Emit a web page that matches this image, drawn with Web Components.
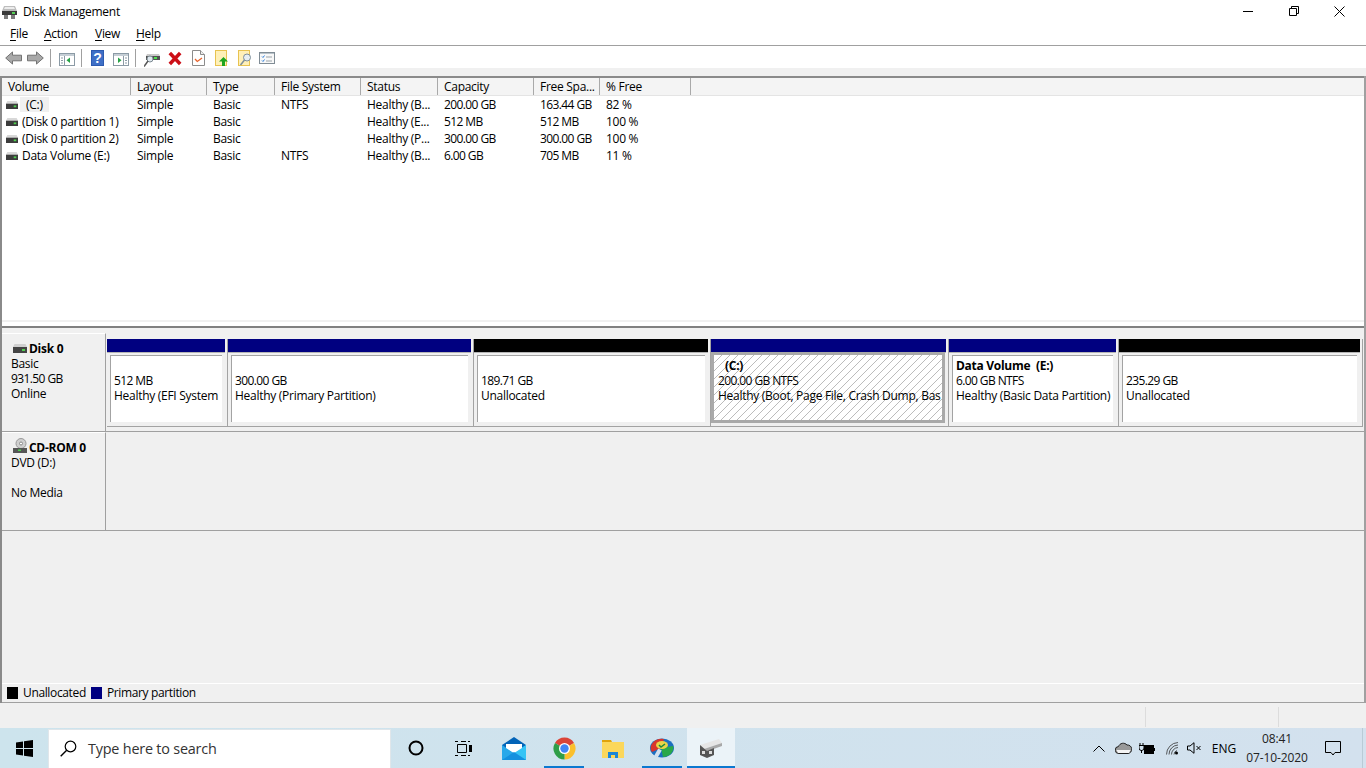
<!DOCTYPE html>
<html><head><meta charset="utf-8"><title>Disk Management</title>
<style>
html,body{margin:0;padding:0;width:1366px;height:768px;overflow:hidden;background:#f0f0f0}
body{font:12px/15px "Open Sans","Noto Sans",sans-serif;color:#000;letter-spacing:-.28px}
.n{letter-spacing:-.6px}
</style></head><body>
<dm-app></dm-app>
<script>
const I={
disk:`<svg width="12" height="8" viewBox="0 0 14 9" preserveAspectRatio="none"><path d="M1.500 0h11L14 3H0z" fill="#d8d8d8"/><rect y="3" width="14" height="6" fill="#3c3c3c"/><rect x="9" y="5" width="3" height="2" fill="#4fd04f"/></svg>`,
};
function el(name,html,init){customElements.define(name,class extends HTMLElement{constructor(){super();this.attachShadow({mode:'open'}).innerHTML=html;}connectedCallback(){init&&init.call(this)}});}
el('dm-titlebar',`<style>:host{display:flex;align-items:center;height:22px;background:#fff;flex:none;padding-right:4px}
.i{margin:2px 6px 0 2px;display:flex}.t{flex:1}
.b{width:45.500px;height:22px;display:flex;align-items:center;justify-content:center}</style>
<span class="i"><svg width="15" height="13" viewBox="0 0 15 13"><path d="M2 0h11l2 5H0z" fill="#bdbdbd"/><path d="M3 1h9l1 2H2z" fill="#ececec"/><rect y="5" width="15" height="4" fill="#3a3a3a"/><rect x="10" y="6" width="3" height="2" fill="#55d055"/><path d="M2 9h4v4H2zM9 9h4v4H9z" fill="#7b7b7b"/></svg></span>
<span class="t">Disk Management</span>
<span class="b"><svg width="10" height="10"><path d="M0 5.500h10" stroke="#000"/></svg></span>
<span class="b"><svg width="10" height="10"><path d="M.5 2.500h7v7h-7zM2.500 2.500v-2h7v7h-2" fill="none" stroke="#000"/></svg></span>
<span class="b"><svg width="11" height="11"><path d="M.5.500l10 10M10.500.500l-10 10" stroke="#000"/></svg></span>`);
el('dm-menubar',`<style>:host{display:flex;height:23px;background:#fff;align-items:center;flex:none;padding-left:10px;border-bottom:1px solid #a0a0a0;box-sizing:content-box}
u{text-underline-offset:2px}</style>
<span style="width:34px"><u>F</u>ile</span><span style="width:51px"><u>A</u>ction</span><span style="width:41px"><u>V</u>iew</span><span><u>H</u>elp</span>`);
el('dm-toolbar',`<style>:host{display:flex;height:22px;background:#fff;align-items:center;flex:none;position:relative}
svg{display:block;position:absolute}i{position:absolute;top:3px;width:1px;height:18px;background:#a0a0a0}</style>
<svg style="left:5px;top:5px" width="17" height="14" viewBox="0 0 17 15" preserveAspectRatio="none"><path d="M.7 7.500L7.500 1v3.500h9v6h-9V14z" fill="#a9a9a9" stroke="#6f6f6f"/></svg>
<svg style="left:27px;top:5px" width="17" height="14" viewBox="0 0 17 15" preserveAspectRatio="none"><path d="M16.300 7.500L9.500 1v3.500h-9v6h9V14z" fill="#a9a9a9" stroke="#6f6f6f"/></svg>
<i style="left:50px"></i>
<svg style="left:59px;top:7px" width="16" height="13" viewBox="0 0 16 13"><rect x=".5" y=".5" width="15" height="12" fill="#fff" stroke="#8b9aa5"/><rect x="1" y="1" width="14" height="2" fill="#c5ced5"/><path d="M5.500 3v9" stroke="#8b9aa5"/><path d="M2 5h2M2 7.500h2M2 10h2" stroke="#8b9aa5"/><path d="M11 4.500v5.500L7.500 7.300z" fill="#25a244"/></svg>
<i style="left:81px"></i>
<svg style="left:91px;top:4px" width="13" height="16" viewBox="0 0 13 16"><rect width="13" height="16" fill="#2c5ab0"/><rect x="1" y="1" width="11" height="14" fill="#3e6fc6"/><text x="6.500" y="13" text-anchor="middle" font-family="Liberation Sans" font-weight="700" font-size="14" fill="#fff" letter-spacing="0">?</text></svg>
<svg style="left:113px;top:7px" width="16" height="13" viewBox="0 0 16 13"><rect x=".5" y=".5" width="15" height="12" fill="#fff" stroke="#8b9aa5"/><rect x="1" y="1" width="14" height="2" fill="#c5ced5"/><path d="M10.500 3v9" stroke="#8b9aa5"/><path d="M12 5h2M12 7.500h2M12 10h2" stroke="#8b9aa5"/><path d="M5 4.500v5.500l3.500-2.700z" fill="#25a244"/></svg>
<i style="left:135px"></i>
<svg style="left:144px;top:8px" width="16" height="13" viewBox="0 0 16 13"><path d="M3 0h12l1 2v4H2V2z" fill="#c9c9c9"/><rect x="2" y="2" width="14" height="4" fill="#505050"/><rect x="10" y="3" width="3" height="2" fill="#4fe04f"/><circle cx="6" cy="5" r="3" fill="#dfe8ee" stroke="#7d8a93"/><path d="M4 7l-4 5.500" stroke="#555" stroke-width="1.500"/></svg>
<svg style="left:168px;top:5px" width="14" height="15" viewBox="0 0 14 15"><path d="M1.800 2l10.400 11M12.200 2L1.800 13" stroke="#cc0f17" stroke-width="3.500"/></svg>
<svg style="left:192px;top:4px" width="13" height="16" viewBox="0 0 13 16"><path d="M.5.500h8l4 4v11H.5z" fill="#fff" stroke="#8c8c8c"/><path d="M8.500.500v4h4" fill="#eee" stroke="#8c8c8c"/><path d="M3 9l2.300 2.500L10 8" fill="none" stroke="#e8622a" stroke-width="1.300"/></svg>
<svg style="left:215px;top:4px" width="13" height="16" viewBox="0 0 13 16"><rect x=".5" y=".5" width="11" height="15" fill="#fff0b8" stroke="#e8c350"/><path d="M8.500 7l4.500 4.500h-3V16H7v-4.500H4z" fill="#1fa51f"/></svg>
<svg style="left:238px;top:4px" width="14" height="16" viewBox="0 0 14 16"><rect x=".5" y=".5" width="11" height="15" fill="#fff0b8" stroke="#e8c350"/><circle cx="9" cy="7.500" r="3.500" fill="#e6eef3" stroke="#7f8f9a"/><path d="M6.500 10l-4 5" stroke="#7f8f9a" stroke-width="1.500"/></svg>
<svg style="left:259px;top:6px" width="16" height="12" viewBox="0 0 16 12"><rect x=".5" y=".5" width="15" height="11" fill="#f8f8f8" stroke="#808c95"/><path d="M1 1h14v1H1z" fill="#b8c2c9"/><path d="M3 4.500l1 1 1.500-2M3 8.500l1 1 1.500-2" fill="none" stroke="#2f7fd8"/><path d="M7 5h6M7 9h6" stroke="#9aa3a9"/></svg>`);
el('dm-row',`<style>:host{display:grid;grid-template-columns:129px 76px 68px 86px 77px 96px 66px 91px;height:17px;align-items:center}
:host([head]){height:18px;box-sizing:border-box;background:#f4f4f4;border-bottom:1px solid #e4e4e4}
::slotted(*){padding-left:6px;white-space:nowrap;overflow:hidden}
:host([head]) ::slotted(*){height:17px;line-height:17px;box-sizing:border-box;border-right:1px solid #a9a9a9}</style><slot></slot>`);
el('dm-vol',`<style>:host{display:flex;align-items:center;gap:4px;padding-left:4px !important}
:host([sel]) .s{background:#f0f0f0;padding:0 6px;margin-left:-2px}</style>${I.disk}<span class="s"><slot></slot></span>`);
el('dm-list',`<style>:host{display:block;height:242px;background:#fff;overflow:hidden;flex:none}</style><slot></slot>`);
el('dm-part',`<style>:host{display:flex;flex-direction:column;box-sizing:border-box;height:88px;border-right:1px solid #a3a3a3;border-bottom:1px solid #a3a3a3;padding-right:2px;width:var(--w)}
.bar{height:13px;background:var(--c,#000080);flex:none}
.line{height:1px;background:#b5b5b5;flex:none}
.cell{flex:1;margin:2px 3px 4px 3px;background:#fff;border-left:1px solid #a3a3a3;border-top:1px solid #a3a3a3;padding:2px 0 0 3px;white-space:nowrap;overflow:hidden;line-height:15px}
:host([sel]) .cell{margin:-1px 1px 3px 0;border:3px solid #a9a9a9;padding:3px 0 0 4px;
background:#fff repeating-linear-gradient(135deg,#fff 0 4.950px,#bcbcbc 4.950px 5.660px)}
.cell ::slotted(b){display:block;height:15px}</style>
<div class="bar"></div><div class="line"></div><div class="cell"><slot></slot></div>`);
el('dm-label',`<style>:host{display:block;box-sizing:border-box;width:104px;flex:none;background:#f0f0f0;border-top:1px solid #fff;border-right:1px solid #a0a0a0;padding:7px 0 0 9px;line-height:15px}
.h{display:flex;align-items:center;gap:2px;font-weight:700;height:15px;margin-left:2px}</style>
<div class="h"><slot name="icon"></slot><slot name="title"></slot></div><slot></slot>`);
el('dm-disk',`<style>:host{display:flex;height:99px;box-sizing:border-box;border-bottom:1px solid #a0a0a0;flex:none}
.p{flex:1;display:flex;padding:5px 0 0 1px;border-top:1px solid transparent}</style><slot name="label"></slot><div class="p"><slot></slot></div>`);
el('dm-legend',`<style>:host{display:flex;align-items:center;height:18px;box-sizing:content-box;background:#f0f0f0;border-top:1px solid #fff;border-bottom:1px solid #a0a0a0;padding-left:5px;flex:none;letter-spacing:-.36px}
i{width:11px;height:12px;background:#000;margin:0 5px 0 0;flex:none}span{position:relative;top:-1px}</style>
<i></i><span style="margin-right:5px">Unallocated</span><i style="background:#000080"></i><span>Primary partition</span>`);
el('dm-status',`<style>:host{display:grid;grid-template-columns:1146px 133px 1fr;height:25px;background:#f0f0f0;padding-top:4px;box-sizing:border-box;flex:none}
div{border-right:1px solid #dcdcdc;height:20px}</style><div></div><div></div>`);
el('dm-main',`<style>:host{display:flex;flex-direction:column;flex:none;box-sizing:border-box;margin-top:8px;border-left:2px solid #8a8a8a;border-right:2px solid #a0a0a0;width:1366px;height:627px}
.top{height:2px;background:#8a8a8a;flex:none}
.sp{flex:none;height:8px;background:linear-gradient(#f0f0f0 0 2px,#fff 2px 6px,#808080 6px 8px)}
.low{height:355px;flex:none;background:#f0f0f0;padding-top:5px;box-sizing:border-box;display:flex;flex-direction:column}</style>
<div class="top"></div><slot name="list"></slot><div class="sp"></div><div class="low"><slot name="disks"></slot></div><slot name="legend"></slot>`);
el('win-taskbar',`<style>:host{display:flex;height:40px;align-items:stretch;flex:none;background:linear-gradient(90deg,#cde4ed,#d3e1ee);position:relative;letter-spacing:0}
.btn{display:flex;align-items:center;justify-content:center;box-sizing:border-box;flex:none;position:relative}
.on{border-bottom:2px solid #0b78d0;padding-top:2px}
.act{background:#ebf3f8}
.search{width:343px;margin-top:1px;background:#fff;border:1px solid #e0e6ea;border-bottom:0;box-sizing:border-box;display:flex;align-items:center;padding:0 0 2px 11px;gap:11px;font:14.400px "Open Sans",sans-serif;letter-spacing:-.2px;color:#333}
.tray{margin-left:auto;display:flex;align-items:center;font-size:12px}
.tray span{display:flex;justify-content:center;align-items:center;flex:none}
.clock{flex-direction:column;text-align:center;line-height:19px;width:72px;color:#222;letter-spacing:-.1px}</style>
<span class="btn" style="width:48px"><svg width="17" height="17" viewBox="0 0 17 17"><path d="M0 2.400L7 1.400v6.600H0zM8 1.200L17 0v8H8zM0 9h7v6.600L0 14.600zM8 9h9v8l-9-1.200z" fill="#000"/></svg></span>
<div class="search"><svg width="17" height="17" viewBox="0 0 17 17"><circle cx="10.500" cy="6.500" r="5.300" fill="none" stroke="#000" stroke-width="1.200"/><path d="M6.700 10.300L.7 16.300" stroke="#000" stroke-width="1.400"/></svg><span>Type here to search</span></div>
<span class="btn" style="width:49px"><svg width="16" height="16" viewBox="0 0 16 16"><circle cx="8" cy="8" r="6.500" fill="none" stroke="#000" stroke-width="2"/></svg></span>
<span class="btn" style="width:46px"><svg width="17" height="15" viewBox="0 0 17 15"><path d="M2.500 3.500h9v8h-9zM0 .5h3M6 .5h5M0 14.500h3M6 14.500h5M13 .5h2M13 14.500h2" fill="none" stroke="#000"/><rect x="14" y="4" width="3" height="7" fill="#000"/></svg></span>
<span class="btn" style="width:56px;margin-right:2px"><svg width="24" height="23" viewBox="0 0 24 23"><path d="M12 0l12 8v3H0V8z" fill="#0364b8"/><path d="M0 8l12 8 12-8v15H0z" fill="#28a8ea"/><path d="M12 16L24 8v15z" fill="#35c4f5"/><path d="M4 7h16v4l-8 5-8-5z" fill="#fff"/><path d="M0 23l12-8 12 8z" fill="#1490df"/></svg></span>
<span class="btn on" style="width:40px"><svg width="23" height="23" viewBox="0 0 23 23"><path d="M11.500 11.500L1.970 6A11 11 0 0 1 21.030 6z" fill="#db4437"/><path d="M11.500 11.500L21.030 6A11 11 0 0 1 11.500 22.500z" fill="#fbc02d"/><path d="M11.500 11.500v11A11 11 0 0 1 1.970 6z" fill="#2f9e48"/><circle cx="11.500" cy="11.500" r="5.500" fill="#fff"/><circle cx="11.500" cy="11.500" r="4.200" fill="#4285f4"/></svg></span>
<span class="btn" style="width:58px"><svg width="22" height="19" viewBox="0 0 22 19"><path d="M0 1h9l1 2H0z" fill="#e0a30b"/><rect y="3" width="22" height="16" fill="#fbd75b"/><path d="M6 19v-6h10v6h-3v-3H9v3z" fill="#1a86d8"/></svg></span>
<span class="btn on" style="width:40px"><svg width="24" height="20" viewBox="0 0 24 20"><ellipse cx="12" cy="10" rx="12" ry="9.500" fill="#1c6fc0"/><path d="M2 14A11 9 0 0 1 14 1L11 10z" fill="#d8342c"/><path d="M11 10l12-2a11 9 0 0 1-10 11z" fill="#2aa84a"/><ellipse cx="12" cy="7" rx="6" ry="4" fill="#e8d548"/><path d="M9 7l2 2 4-3" fill="none" stroke="#1a8a3a" stroke-width="1.500"/><rect x="6" y="11" width="4" height="8" fill="#d3e1ee" transform="rotate(30 8 15)"/></svg></span>
<span class="btn on act" style="width:48px;margin-left:5px"><svg width="24" height="19" viewBox="0 0 24 19"><path d="M1 6L20 0l3 4L5 10z" fill="#e6e6e6"/><path d="M5 10L23 4v3L6 13z" fill="#a8a8a8"/><path d="M1 6v10l7 3 7-3V9L8 12z" fill="#555"/><path d="M3 12h3v3H3zM10 12h3v3h-3z" fill="#ddd"/></svg></span>
<div class="tray">
<span style="width:12px;margin-right:9.500px"><svg width="12" height="7" viewBox="0 0 12 7"><path d="M.5 6.500l5.500-5.500 5.500 5.500" fill="none" stroke="#000"/></svg></span>
<span style="width:17px;margin-right:7.500px"><svg width="17" height="12" viewBox="0 0 17 12"><path d="M4 11.500a3.500 3.500 0 0 1-.5-7A5 5 0 0 1 12 3a4 4 0 0 1 1 8.500z" fill="#999" stroke="#222"/><path d="M1.500 8h14l-1.500 3H3z" fill="#f4f4f4"/></svg></span>
<span style="width:16px;margin-right:10.500px"><svg width="16" height="13" viewBox="0 0 16 13"><path d="M1 1v2M4 1v2M0 3.500h5v2.500a2.500 2.500 0 0 1-5 0zM2.500 8v3" fill="none" stroke="#000"/><rect x="5.500" y="3.500" width="9" height="8" fill="#000" stroke="#000"/><rect x="15" y="6" width="1" height="3"/></svg></span>
<span style="width:13px;margin-right:8.500px"><svg width="13" height="13" viewBox="0 0 13 13"><path d="M.5 12.500A12 12 0 0 1 12 .5M3 12.500A9.500 9.500 0 0 1 12 3M5.500 12.500A7 7 0 0 1 12 5.500M8 12.500a4.500 4.500 0 0 1 3-4" fill="none" stroke="#333" stroke-width=".8"/><circle cx="10.500" cy="11" r="1.500"/></svg></span>
<span style="width:14px;margin-right:10px"><svg width="14" height="12" viewBox="0 0 14 12"><path d="M.5 4h2.500L7 .7v10.600L3 8H.5zM9.500 4l4 4M13.500 4l-4 4" fill="none" stroke="#000"/></svg></span>
<span style="width:26px;margin-right:4px">ENG</span>
<span class="clock"><div>08:41</div><div>07-10-2020</div></span>
<span style="width:40px;margin-right:9px"><svg width="16" height="15" viewBox="0 0 16 15"><path d="M.5.500h15v11H10l-2 2.500-2-2.500H.5z" fill="none" stroke="#000"/></svg></span>
<span style="width:4px;box-sizing:border-box;border-left:1px solid #b9cbd6;height:40px"></span>
</div>`);
el('dm-app',`<style>:host{display:flex;flex-direction:column;width:1366px;height:768px}
.n{letter-spacing:-.6px}</style>
<dm-titlebar></dm-titlebar><dm-menubar></dm-menubar><dm-toolbar></dm-toolbar>
<dm-main>
<dm-list slot="list">
<dm-row head><span>Volume</span><span>Layout</span><span>Type</span><span>File System</span><span>Status</span><span>Capacity</span><span>Free Spa...</span><span>% Free</span></dm-row>
<dm-row><dm-vol sel>(C:)</dm-vol><span>Simple</span><span>Basic</span><span>NTFS</span><span>Healthy (B...</span><span class="n">200.00 GB</span><span class="n">163.44 GB</span><span>82 %</span></dm-row>
<dm-row><dm-vol>(Disk 0 partition 1)</dm-vol><span>Simple</span><span>Basic</span><span></span><span>Healthy (E...</span><span class="n">512 MB</span><span class="n">512 MB</span><span>100 %</span></dm-row>
<dm-row><dm-vol>(Disk 0 partition 2)</dm-vol><span>Simple</span><span>Basic</span><span></span><span>Healthy (P...</span><span class="n">300.00 GB</span><span class="n">300.00 GB</span><span>100 %</span></dm-row>
<dm-row><dm-vol>Data Volume (E:)</dm-vol><span>Simple</span><span>Basic</span><span>NTFS</span><span>Healthy (B...</span><span class="n">6.00 GB</span><span class="n">705 MB</span><span>11 %</span></dm-row>
</dm-list>
<dm-disk slot="disks">
<dm-label slot="label"><svg slot="icon" width="14" height="9" viewBox="0 0 14 9"><path d="M1.500 0h11L14 3H0z" fill="#d0d0d0"/><rect y="3" width="14" height="6" fill="#444"/><rect x="9" y="5" width="3" height="2" fill="#4fd04f"/></svg><span slot="title">Disk 0</span>Basic<br><span class="n">931.50 GB</span><br>Online</dm-label>
<dm-part style="--w:121px"><b></b><span class="n">512 MB</span><br>Healthy (EFI System</dm-part>
<dm-part style="--w:246px"><b></b><span class="n">300.00 GB</span><br>Healthy (Primary Partition)</dm-part>
<dm-part style="--w:237px;--c:#000"><b></b><span class="n">189.71 GB</span><br>Unallocated</dm-part>
<dm-part sel style="--w:238px"><b style="font-weight:700;padding-left:7px">(C:)</b><span class="n">200.00 GB NTFS</span><br>Healthy (Boot, Page File, Crash Dump, Bas</dm-part>
<dm-part style="--w:170px"><b style="font-weight:700">Data Volume&nbsp; (E:)</b><span class="n">6.00 GB NTFS</span><br>Healthy (Basic Data Partition)</dm-part>
<dm-part style="--w:244px;--c:#000"><b></b><span class="n">235.29 GB</span><br>Unallocated</dm-part>
</dm-disk>
<dm-disk slot="disks">
<dm-label slot="label"><svg slot="icon" style="margin-top:-4px" width="14" height="15" viewBox="0 0 14 15"><circle cx="8" cy="5.500" r="5" fill="#cfcfcf" stroke="#9a9a9a"/><circle cx="8" cy="5.500" r="1.500" fill="#fff" stroke="#888"/><rect x="0" y="10" width="14" height="5" fill="#555"/><rect x="5" y="11.500" width="3" height="1.500" fill="#4fd04f"/></svg><span slot="title">CD-ROM 0</span>DVD (D:)<br><br>No Media</dm-label>
</dm-disk>
<div slot="disks" style="flex:1"></div>
<dm-legend slot="legend"></dm-legend>
</dm-main>
<dm-status></dm-status>
<win-taskbar></win-taskbar>`);
</script>
</body></html>
